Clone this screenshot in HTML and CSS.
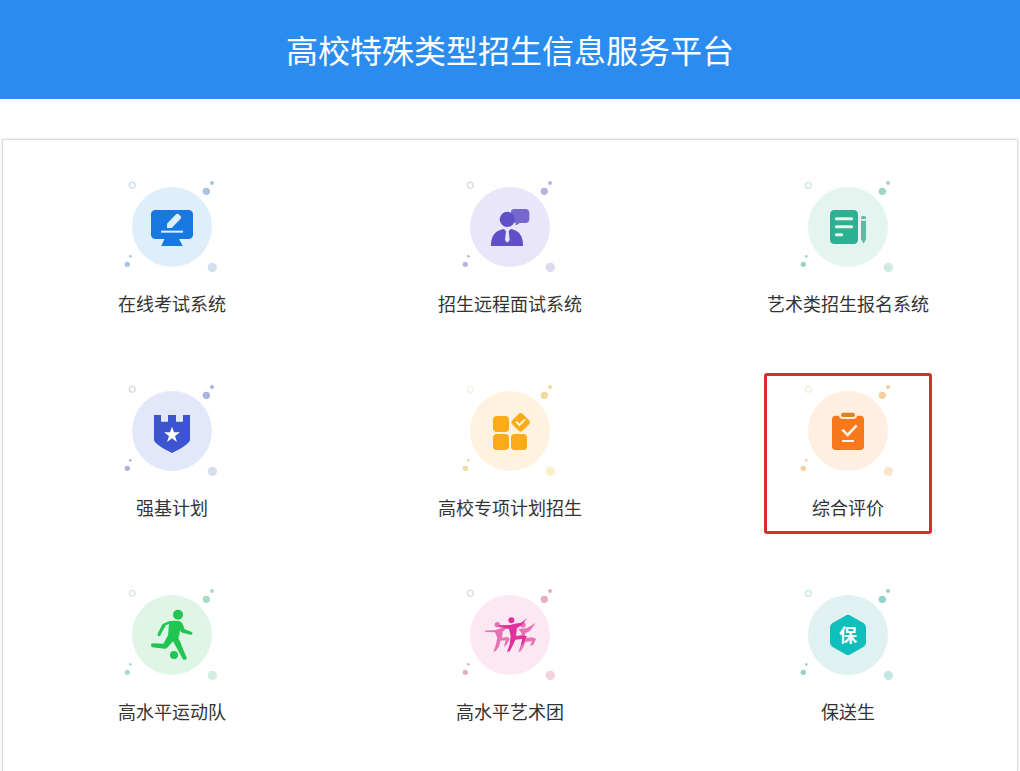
FILE: index.html
```html
<!DOCTYPE html>
<html lang="zh-CN">
<head>
<meta charset="utf-8">
<meta name="viewport" content="width=device-width, initial-scale=1">
<title>高校特殊类型招生信息服务平台</title>
<link rel="stylesheet" href="styles.css">
</head>
<body>
<svg class="defs" aria-hidden="true">
  <symbol id="bubbles" viewBox="0 0 300 300">
    <circle class="disc" cx="150" cy="150" r="120"/>
    <circle class="ring" cx="31" cy="25" r="9"/>
    <circle class="dot" cx="270" cy="18" r="6"/>
    <circle class="dot" cx="253" cy="43" r="11"/>
    <circle class="dot" cx="25" cy="238" r="4"/>
    <circle class="dot" cx="16" cy="262" r="8"/>
    <circle class="pale" cx="271" cy="271" r="14"/>
  </symbol>
</svg>

<header class="header">
  <h1 class="title">高校特殊类型招生信息服务平台</h1>
</header>

<main class="panel">
  <a class="tile sky" href="#">
    <svg class="icon" viewBox="0 0 300 300" aria-hidden="true">
      <use href="#bubbles"/>
      <g transform="translate(-36 -21)">
        <rect class="main" x="123" y="120" width="126" height="87" rx="13"/>
        <path class="main" d="M164 205h42l12 23h-64z"/>
        <path class="cut" d="M171 161l27-28q4-4 8 0l6 6q3 4 0 7l-27 28h-14z"/>
        <path class="cut" d="M153 182h66v6h-66z"/>
      </g>
    </svg>
    <span class="label">在线考试系统</span>
  </a>
  <a class="tile violet" href="#">
    <svg class="icon" viewBox="0 0 300 300" aria-hidden="true">
      <use href="#bubbles"/>
      <g transform="translate(-90 -21)">
        <path class="soft" d="M252 117h34q12 0 12 12v18q0 12-12 12h-17q-5 6-13 7l1-8q-14-1-14-12v-20q0-9 9-9z"/>
        <circle class="main" cx="232" cy="148" r="23"/>
        <path class="main" d="M183 228v-6q2-39 38-45h22q34 6 36 45v6z"/>
        <path class="cut" d="M221 176h22l-7 8 3 27-7 7-7-7 3-27z"/>
      </g>
    </svg>
    <span class="label">招生远程面试系统</span>
  </a>
  <a class="tile jade" href="#">
    <svg class="icon" viewBox="0 0 300 300" aria-hidden="true">
      <use href="#bubbles"/>
      <g transform="translate(-114 -21)">
        <rect class="main" x="210" y="120" width="84" height="102" rx="13"/>
        <path class="line" stroke-width="9" stroke-linecap="round" d="M229 146h46M229 170h46M229 194h16"/>
        <path class="soft" d="M303 147v-4q0-5 5-5h5q5 0 5 5v4zM303 152h15v56l-7 13-8-13z"/>
      </g>
    </svg>
    <span class="label">艺术类招生报名系统</span>
  </a>

  <a class="tile indigo" href="#">
    <svg class="icon" viewBox="0 0 300 300" aria-hidden="true">
      <use href="#bubbles"/>
      <g transform="translate(-36 -18)">
        <path class="main" d="M132 120h21v20h21v-20h24v20h21v-20h21v76q-5 14-54 38-49-24-54-38z"/>
        <path class="white" d="M186 155l6 17h18l-15 11 6 18-15-11-15 11 6-18-15-11h18z"/>
      </g>
    </svg>
    <span class="label">强基计划</span>
  </a>
  <a class="tile amber" href="#">
    <svg class="icon" viewBox="0 0 300 300" aria-hidden="true">
      <use href="#bubbles"/>
      <g transform="translate(-90 -18)">
        <rect class="main" x="189" y="123" width="48" height="48" rx="11"/>
        <rect class="main" x="189" y="177" width="48" height="48" rx="11"/>
        <rect class="main" x="243" y="177" width="48" height="48" rx="11"/>
        <rect class="main" x="250" y="120" width="44" height="44" rx="9" transform="rotate(45 272 142)"/>
        <path class="line" stroke-width="6" d="M258 140l10 10 17-17"/>
      </g>
    </svg>
    <span class="label">高校专项计划招生</span>
  </a>
  <a class="tile orange selected" href="#">
    <svg class="icon" viewBox="0 0 300 300" aria-hidden="true">
      <use href="#bubbles"/>
      <g transform="translate(-114 -48)">
        <rect class="main" x="216" y="152" width="96" height="103" rx="11"/>
        <rect class="cut" x="237" y="137" width="54" height="25" rx="12"/>
        <rect class="soft" x="243" y="143" width="42" height="13" rx="6"/>
        <path class="line" stroke-width="8" d="M247 194l16 16 27-29"/>
        <path class="cut" d="M246 225h36v6h-36z"/>
      </g>
    </svg>
    <span class="label">综合评价</span>
  </a>

  <a class="tile green" href="#">
    <svg class="icon" viewBox="0 0 300 300" aria-hidden="true">
      <use href="#bubbles"/>
      <g transform="translate(-36 -15)">
        <circle class="main" cx="204" cy="104" r="15"/>
        <circle class="main" cx="192" cy="225" r="12"/>
        <path class="main" d="M176 124q10-3 30-1 10 2 13 12l5 13 21 8q4 2 2 6-1 3-6 2l-24-6q-5-2-7-8-1 14-5 25 8 14 12 27l13 31q1 5-4 6-5 2-8-3l-29-52-18 20q-3 3-8 2l-36-4q-4-1-4-6 0-6 5-6l32 1 14-25 3-34-9 3-14 25q-3 10-8 9-5-2-3-8l14-28z"/>
      </g>
    </svg>
    <span class="label">高水平运动队</span>
  </a>
  <a class="tile pink" href="#">
    <svg class="icon" viewBox="0 0 300 300" aria-hidden="true">
      <use href="#bubbles"/>
      <g transform="translate(45 60)">
        <circle class="soft" cx="67" cy="59" r="8"/>
        <circle class="soft" cx="144" cy="60" r="8"/>
        <circle class="main" cx="109" cy="46" r="9"/>
        <path class="soft" d="M28 77l34-2 16-6 18-1-13 13-2 17 17-2 6 6-10 19-7 4 5-19-16 1-4 18-10 13-7 2 8-22 4-20-7-16-28-1z"/>
        <path class="soft" d="M130 72l25-2 27-16-18 25-13 5-1 16 20-3 13 4-7 17-11 6 6-16-20 3-6 16-8 12-7 2 8-22 5-22-5-15z"/>
        <path class="main" d="M70 61l35-1 14-4 20-3 17-14-14 20-16 11-3 23 16-2 17 3-10 21-9 7 5-20-21 2-8 18-9 17-8 2 8-23 3-25-5-21-30-6z"/>
      </g>
    </svg>
    <span class="label">高水平艺术团</span>
  </a>
  <a class="tile teal" href="#">
    <svg class="icon" viewBox="0 0 300 300" aria-hidden="true">
      <use href="#bubbles"/>
      <path class="main" d="M142 92q8-5 16 0l38 22q8 5 8 13v46q0 8-8 13l-38 22q-8 5-16 0l-38-22q-8-5-8-13v-46q0-8 8-13z"/>
      <text class="mark" x="150" y="170" text-anchor="middle">保</text>
    </svg>
    <span class="label">保送生</span>
  </a>
</main>
</body>
</html>
```

FILE: styles.css
```css
* {
  box-sizing: border-box;
}

body {
  display: flex;
  flex-direction: column;
  min-height: 100vh;
  margin: 0;
  background: #fff;
  color: #333;
  font-family: "Noto Sans CJK SC", sans-serif;
}

.defs {
  display: none;
}

.header {
  padding: 25px 0 26px;
  background: #2b8cef;
  color: #fff;
  text-align: center;
}

.title {
  margin: 0;
  font-size: 32px;
  font-weight: 400;
  line-height: 48px;
}

.panel {
  display: grid;
  flex: 1;
  grid-template-columns: repeat(3, 1fr);
  align-content: start;
  justify-items: center;
  row-gap: 43px;
  margin: 40px 2px 0;
  padding: 29px 0;
  border: 1px solid #dcdcdc;
  border-bottom: 0;
  box-shadow: 0 0 3px rgba(0, 0, 0, 0.12);
}

.tile {
  display: flex;
  flex-direction: column;
  align-items: center;
  gap: 12px;
  min-width: 168px;
  padding: 5px 0 10px;
  border: 3px solid transparent;
  border-radius: 3px;
  color: inherit;
  text-decoration: none;
}

.selected {
  border-color: #d62f2b;
}

.icon {
  width: 100px;
  height: 100px;
}

.label {
  font-size: 18px;
  line-height: 28px;
  white-space: nowrap;
}

.disc, .cut { fill: var(--disc); }
.dot { fill: var(--dot); }
.pale { fill: var(--pale); }
.main { fill: var(--main); }
.soft { fill: var(--soft); }
.white { fill: #fff; }

.ring {
  fill: none;
  stroke: var(--ring);
  stroke-width: 3px;
}

.line {
  fill: none;
  stroke: var(--disc);
}

.mark {
  fill: #fff;
  font-size: 54px;
  font-weight: 700;
}

.sky { --disc: #dfeefb; --dot: #a5c4e3; --pale: #d2dfee; --ring: #b5ccd9; --main: #1779df; --soft: #1779df; }
.violet { --disc: #e8e6f8; --dot: #b8b5dc; --pale: #dcdaef; --ring: #c8c8d2; --main: #5f50c9; --soft: #7668cd; }
.jade { --disc: #e4f5f0; --dot: #9fd3c5; --pale: #d0ebe2; --ring: #b3dacf; --main: #2db092; --soft: #5bbca6; }
.indigo { --disc: #e2e7f9; --dot: #a9b3dc; --pale: #d9dcee; --ring: #c4c8d4; --main: #3c54d0; --soft: #3c54d0; }
.amber { --disc: #fff3df; --dot: #efdc98; --pale: #faefc9; --ring: #eee8cf; --main: #fbab18; --soft: #fbab18; }
.orange { --disc: #ffefe0; --dot: #f3cf9d; --pale: #fce5cc; --ring: #ece4c4; --main: #f8781b; --soft: #d9822c; }
.green { --disc: #dff6e6; --dot: #aadbc4; --pale: #d2efe2; --ring: #c5dcd0; --main: #20c552; --soft: #20c552; }
.pink { --disc: #fde7f3; --dot: #e6adc5; --pale: #f4d1df; --ring: #d5c5cf; --main: #e0309b; --soft: #e374b3; }
.teal { --disc: #dff1f0; --dot: #93d2ca; --pale: #c4e9e2; --ring: #a9dcd4; --main: #0fbfbb; --soft: #0fbfbb; }
```
